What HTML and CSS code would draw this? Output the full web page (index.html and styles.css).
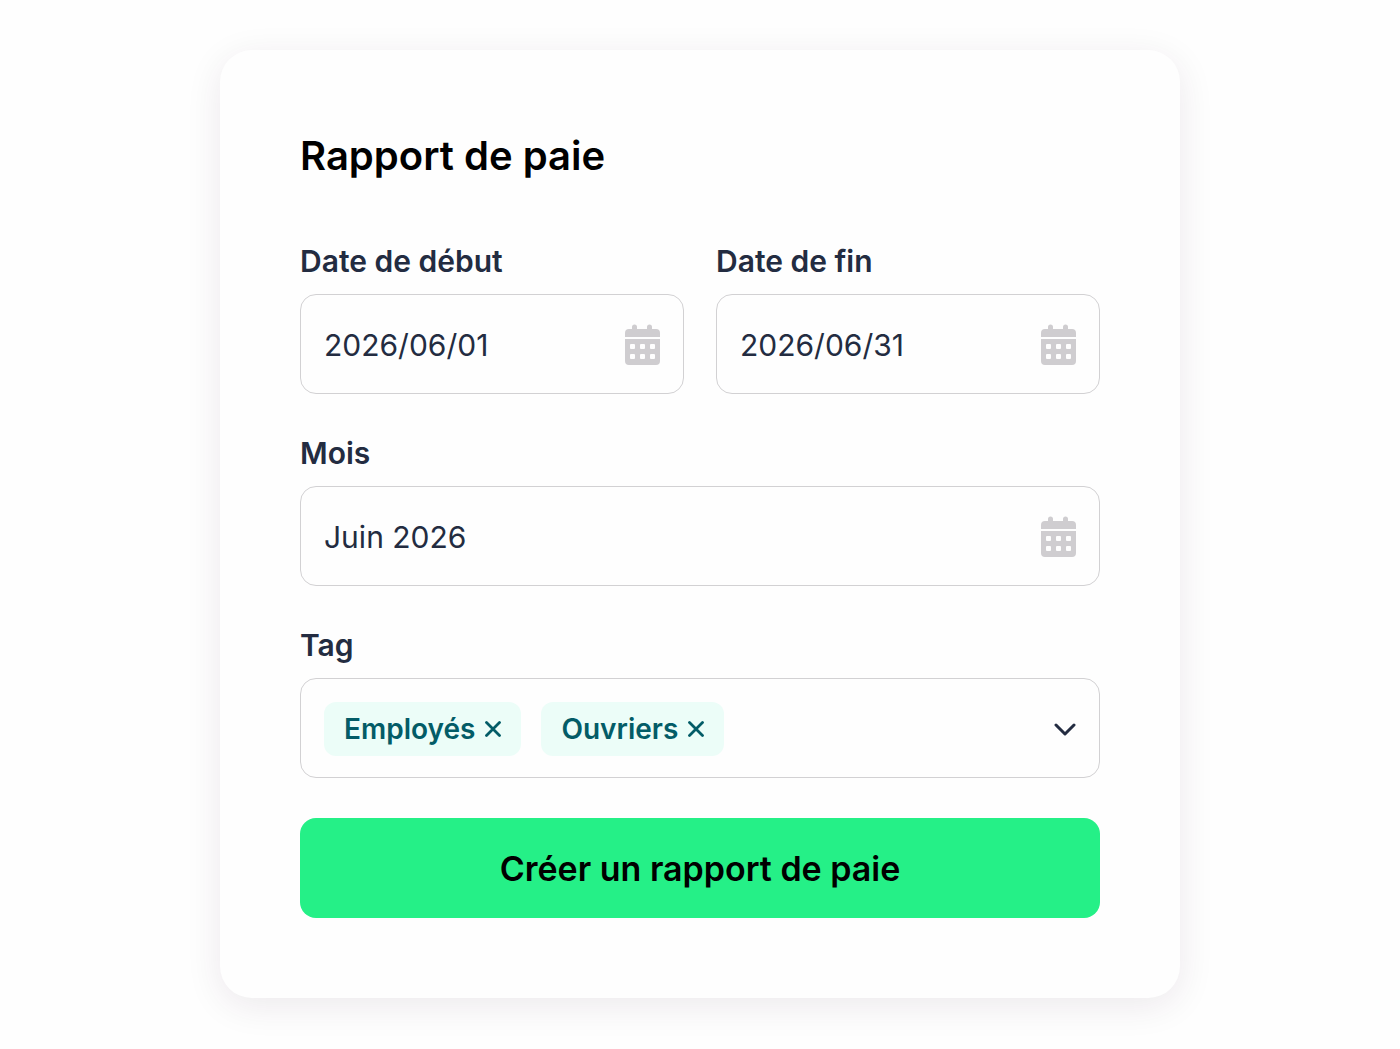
FILE: index.html
```
<!DOCTYPE html>
<html lang="fr">
<head>
  <meta charset="UTF-8">
  <meta name="viewport" content="width=device-width, initial-scale=1.0">
  <title>Rapport de paie</title>
  <link rel="stylesheet" href="styles.css">
</head>
<body>
  <svg class="sprite" aria-hidden="true">
    <symbol id="icon-calendar" viewBox="0 0 35 42">
      <path d="M5 5h2V3a2 2 0 0 1 5 0v2h10V3a2 2 0 0 1 5 0v2h4a4 4 0 0 1 4 4v4H0V9a4 4 0 0 1 4-4z"/>
      <path fill-rule="evenodd" d="M0 15h35v22a4 4 0 0 1-4 4H4a4 4 0 0 1-4-4zM6 20h3a1 1 0 0 1 1 1v3a1 1 0 0 1-1 1H6a1 1 0 0 1-1-1v-3a1 1 0 0 1 1-1zM16 20h3a1 1 0 0 1 1 1v3a1 1 0 0 1-1 1h-3a1 1 0 0 1-1-1v-3a1 1 0 0 1 1-1zM26 20h3a1 1 0 0 1 1 1v3a1 1 0 0 1-1 1h-3a1 1 0 0 1-1-1v-3a1 1 0 0 1 1-1zM6 30h3a1 1 0 0 1 1 1v3a1 1 0 0 1-1 1H6a1 1 0 0 1-1-1v-3a1 1 0 0 1 1-1zM16 30h3a1 1 0 0 1 1 1v3a1 1 0 0 1-1 1h-3a1 1 0 0 1-1-1v-3a1 1 0 0 1 1-1zM26 30h3a1 1 0 0 1 1 1v3a1 1 0 0 1-1 1h-3a1 1 0 0 1-1-1v-3a1 1 0 0 1 1-1z"/>
    </symbol>
    <symbol id="icon-close" viewBox="0 0 16 16">
      <path d="M1.500 1.500l13 13M14.500 1.500l-13 13" fill="none" stroke="currentColor" stroke-width="2.800" stroke-linecap="round"/>
    </symbol>
    <symbol id="icon-chevron" viewBox="0 0 22 14">
      <path d="M2 3l9 9l9-9" fill="none" stroke="currentColor" stroke-width="3" stroke-linecap="round" stroke-linejoin="round"/>
    </symbol>
  </svg>

  <form class="card">
    <h1 class="title">Rapport de paie</h1>

    <div class="row">
      <div class="group">
        <label class="label" for="startDate">Date de début</label>
        <div class="field">
          <input id="startDate" class="input" type="text" value="2026/06/01">
          <svg class="calendar" aria-hidden="true"><use href="#icon-calendar"/></svg>
        </div>
      </div>
      <div class="group">
        <label class="label" for="endDate">Date de fin</label>
        <div class="field">
          <input id="endDate" class="input" type="text" value="2026/06/31">
          <svg class="calendar" aria-hidden="true"><use href="#icon-calendar"/></svg>
        </div>
      </div>
    </div>

    <div class="group">
      <label class="label" for="month">Mois</label>
      <div class="field">
        <input id="month" class="input" type="text" value="Juin 2026">
        <svg class="calendar" aria-hidden="true"><use href="#icon-calendar"/></svg>
      </div>
    </div>

    <div class="group">
      <label class="label" for="tagToggle">Tag</label>
      <div class="field">
        <div class="tags">
          <span class="tag">Employés
            <button class="remove" type="button" aria-label="Retirer Employés"><svg class="close"><use href="#icon-close"/></svg></button>
          </span>
          <span class="tag">Ouvriers
            <button class="remove" type="button" aria-label="Retirer Ouvriers"><svg class="close"><use href="#icon-close"/></svg></button>
          </span>
        </div>
        <button id="tagToggle" class="toggle" type="button"><svg class="chevron"><use href="#icon-chevron"/></svg></button>
      </div>
    </div>

    <button class="submit" type="submit">Créer un rapport de paie</button>
  </form>
</body>
</html>
```
FILE: styles.css
```
* {
  box-sizing: border-box;
}
body {
  margin: 0;
  padding: 50px 24px;
  background-color: #fefefe;
  font-family: 'Inter', sans-serif;
  color: #232c41;
}
.sprite {
  display: none;
}
.card {
  max-width: 960px;
  margin: 0 auto;
  padding: 80px;
  background-color: #fefefe;
  border-radius: 32px;
  box-shadow: 0 8px 36px rgba(50, 20, 60, 0.09);
}
.title {
  margin: 0 0 58px;
  font-size: 40px;
  line-height: 52px;
  font-weight: 600;
  color: #000;
}
.row {
  display: grid;
  grid-template-columns: 1fr 1fr;
  gap: 32px;
}
.group {
  margin-bottom: 38px;
}
.row .group {
  min-width: 0;
}
.label {
  display: block;
  margin-bottom: 12px;
  font-size: 30px;
  line-height: 42px;
  font-weight: 600;
}
.field {
  display: flex;
  align-items: center;
  min-height: 100px;
  padding: 1px 23px 0;
  border: 1px solid #d2d1d3;
  border-radius: 16px;
}
.input {
  flex: 1;
  min-width: 0;
  padding: 0;
  border: none;
  outline: none;
  background: none;
  font-family: inherit;
  font-size: 30px;
  line-height: 40px;
  color: inherit;
}
.calendar {
  width: 35px;
  height: 42px;
  flex: none;
  fill: #cfcdd0;
}
.tags {
  display: flex;
  flex-wrap: wrap;
  flex: 1;
  gap: 20px;
}
.tag {
  display: flex;
  align-items: center;
  gap: 10px;
  height: 54px;
  padding: 0 20px;
  border-radius: 12px;
  background-color: #ecfdf8;
  font-size: 28px;
  font-weight: 600;
  color: #035c67;
}
.remove, .toggle {
  display: flex;
  padding: 0;
  border: none;
  background: none;
  color: inherit;
  cursor: pointer;
}
.close {
  width: 16px;
  height: 16px;
}
.chevron {
  width: 22px;
  height: 14px;
}
.submit {
  display: block;
  width: 100%;
  min-height: 100px;
  margin-top: 40px;
  border: none;
  border-radius: 16px;
  background-color: #25f087;
  font-family: inherit;
  font-size: 34px;
  font-weight: 600;
  color: #000;
  cursor: pointer;
}
```
